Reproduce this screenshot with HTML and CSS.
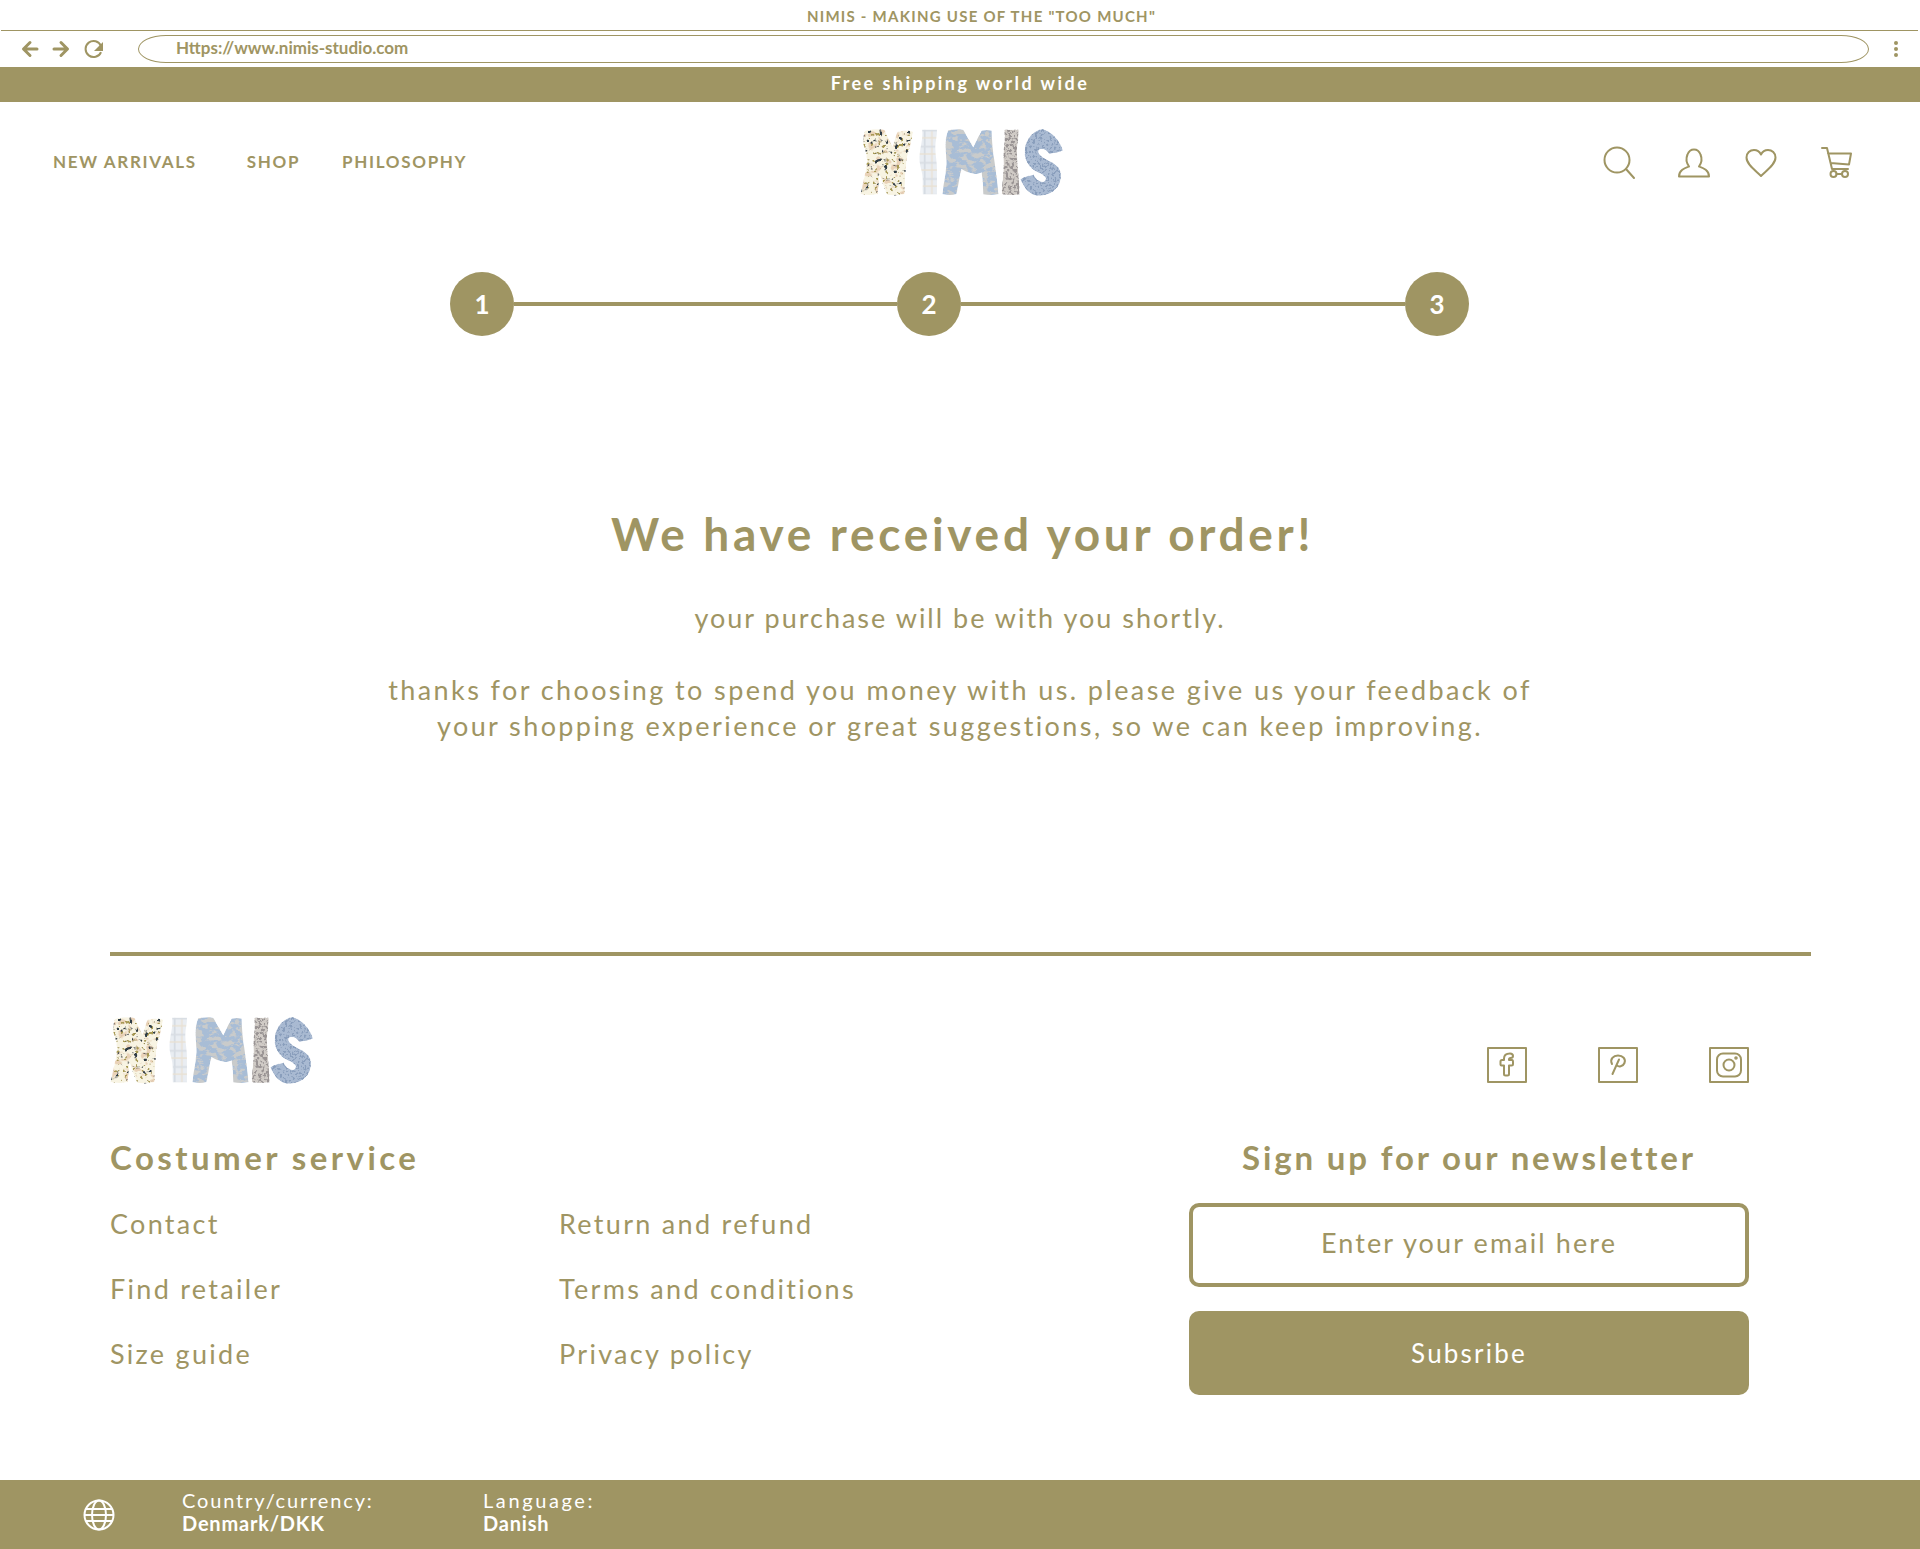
FILE: index.html
```html
<!DOCTYPE html>
<html lang="en">
<head>
<meta charset="utf-8">
<title>NIMIS - Order received</title>
<link rel="stylesheet" href="styles.css">
</head>
<body>
<svg class="defs" width="0" height="0" aria-hidden="true">
  <defs>
    <filter id="tex-floral" x="0" y="0" width="100%" height="100%">
      <feTurbulence type="fractalNoise" baseFrequency="0.07" numOctaves="2" seed="4"/>
      <feColorMatrix type="matrix" values="0 0 0 0 0  0 0 0 0 0  0 0 0 0 0  7 -7 0 0 -1.1" result="n"/>
      <feFlood flood-color="#2f3d46"/><feComposite in2="n" operator="in" result="dark"/>
      <feTurbulence type="fractalNoise" baseFrequency="0.05" numOctaves="2" seed="21"/>
      <feColorMatrix type="matrix" values="0 0 0 0 0  0 0 0 0 0  0 0 0 0 0  6 -6 0 0 -0.3" result="n2"/>
      <feFlood flood-color="#e9d2b8"/><feComposite in2="n2" operator="in" result="peach"/>
      <feTurbulence type="fractalNoise" baseFrequency="0.09" numOctaves="2" seed="33"/>
      <feColorMatrix type="matrix" values="0 0 0 0 0  0 0 0 0 0  0 0 0 0 0  7 -7 0 0 -1.2" result="n3"/>
      <feFlood flood-color="#a89a52"/><feComposite in2="n3" operator="in" result="olive"/>
      <feMerge result="m"><feMergeNode in="SourceGraphic"/><feMergeNode in="peach"/><feMergeNode in="olive"/><feMergeNode in="dark"/></feMerge>
      <feComposite in="m" in2="SourceAlpha" operator="in"/>
    </filter>
    <filter id="tex-marble" x="0" y="0" width="100%" height="100%">
      <feTurbulence type="fractalNoise" baseFrequency="0.045 0.07" numOctaves="3" seed="9"/>
      <feColorMatrix type="matrix" values="0 0 0 0 0  0 0 0 0 0  0 0 0 0 0  6 -6 0 0 0.25" result="n"/>
      <feFlood flood-color="#c9cbcb"/><feComposite in2="n" operator="in" result="dark"/>
      <feMerge result="m"><feMergeNode in="SourceGraphic"/><feMergeNode in="dark"/></feMerge>
      <feComposite in="m" in2="SourceAlpha" operator="in"/>
    </filter>
    <filter id="tex-grain" x="0" y="0" width="100%" height="100%">
      <feTurbulence type="fractalNoise" baseFrequency="0.12" numOctaves="2" seed="3"/>
      <feColorMatrix type="matrix" values="0 0 0 0 0.32  0 0 0 0 0.3  0 0 0 0 0.3  6 -6 0 0 0.2" result="n"/>
      <feMerge result="m"><feMergeNode in="SourceGraphic"/><feMergeNode in="n"/></feMerge>
      <feComposite in="m" in2="SourceAlpha" operator="in"/>
    </filter>
    <filter id="tex-speck" x="-15%" y="-15%" width="130%" height="130%">
      <feTurbulence type="fractalNoise" baseFrequency="0.14" numOctaves="2" seed="12"/>
      <feColorMatrix type="matrix" values="0 0 0 0 0.25  0 0 0 0 0.34  0 0 0 0 0.5  6 -6 0 0 -0.1" result="n"/>
      <feMerge result="m"><feMergeNode in="SourceGraphic"/><feMergeNode in="n"/></feMerge>
      <feComposite in="m" in2="SourceAlpha" operator="in"/>
    </filter>
    <pattern id="plaid" width="48" height="48" patternUnits="userSpaceOnUse">
      <rect width="48" height="48" fill="#e9edf2"/>
      <rect x="8" width="5" height="48" fill="#d6dce3"/>
      <rect x="30" width="4" height="48" fill="#e9e1d3"/>
      <rect y="10" width="48" height="5" fill="#d8dde3"/>
      <rect y="32" width="48" height="4" fill="#e9e1d3"/>
    </pattern>
    <symbol id="nimis-logo" viewBox="58 50 604 208">
      <path fill="#f8f4e3" filter="url(#tex-floral)" d="M72 62C90 55 120 56 132 60C140 80 148 92 155 108C160 92 165 75 170 64C185 60 205 60 216 64C212 90 204 115 198 140C192 180 192 220 190 250C172 254 155 254 140 252C130 232 122 210 116 190C114 212 112 232 110 250C92 253 75 252 60 250C66 220 74 190 78 160C80 135 74 115 66 95C68 82 70 72 72 62Z"/>
      <path fill="url(#plaid)" d="M243 58H287C288 75 282 92 282 110C282 135 288 158 287 180V250H245C243 230 247 210 243 190C240 172 234 158 235 140C236 112 246 88 243 58Z"/>
      <path fill="#a8bdd6" filter="url(#tex-marble)" d="M320 60C335 56 352 56 365 58C375 76 385 92 395 110C403 92 412 76 420 60C430 58 442 58 450 60C450 85 452 108 455 130C460 170 468 210 470 250C455 253 440 253 425 250C424 228 423 206 420 185C412 188 406 190 400 190C385 188 372 182 360 175C354 200 350 225 345 250C330 253 315 252 303 250C306 220 314 190 315 160C316 125 306 95 320 60Z"/>
      <path fill="#d0cbc6" filter="url(#tex-grain)" d="M487 58H530C532 80 524 105 525 130C527 170 532 210 533 250C515 253 497 253 480 250C480 215 487 185 485 150C483 118 492 88 487 58Z"/>
      <path fill="#a9bad2" filter="url(#tex-speck)" d="M600 56C625 62 650 85 662 120C650 125 635 128 622 130C612 118 600 112 590 118C585 130 600 140 620 150C645 162 660 175 655 205C650 240 615 256 585 254C565 252 548 235 535 205C548 198 560 194 575 192C582 205 592 215 605 212C615 208 612 198 598 190C570 178 548 160 548 125C548 90 570 62 600 56Z"/>
    </symbol>
  </defs>
</svg>

<div class="titlebar">NIMIS - MAKING USE OF THE "TOO MUCH"</div>
<div class="addressrow">
  <svg class="nav-arrows" width="84" height="22" viewBox="0 0 84 22" aria-hidden="true">
    <path class="browser-stroke" d="M17 11H4M10 4.500L3.500 11L10 17.500M34 11H47M41 4.500L47.500 11L41 17.500"/>
    <path class="browser-thin" d="M81 8A8 8 0 1 0 81 14"/>
    <path class="browser-fill" d="M83 4V13H74Z"/>
  </svg>
  <div class="urlbar">Https://www.nimis-studio.com</div>
  <svg class="kebab" width="6" height="16" viewBox="0 0 6 16" aria-hidden="true"><circle cx="3" cy="2" r="2"/><circle cx="3" cy="8" r="2"/><circle cx="3" cy="14" r="2"/></svg>
</div>
<div class="promo">Free shipping world wide</div>

<header class="site-header">
  <nav class="main-nav">
    <a class="nav-new">NEW ARRIVALS</a>
    <a class="nav-shop">SHOP</a>
    <a>PHILOSOPHY</a>
  </nav>
  <svg class="logo" role="img" aria-label="NIMIS"><use href="#nimis-logo"/></svg>
  <div class="header-icons">
    <svg class="ic ic-search" viewBox="0 0 32 32" aria-hidden="true"><circle cx="15" cy="13" r="12.500"/><path d="M24 22L32 31"/></svg>
    <svg class="ic ic-user" viewBox="0 0 32 32" aria-hidden="true"><path d="M1 29.500C1 23 7 21 11 19.500C8.500 16 8 11 9.500 7.500C11 3.500 14 2.500 16 2.500C18 2.500 21 3.500 22.500 7.500C24 11 23.500 16 21 19.500C25 21 31 23 31 29.500Z"/></svg>
    <svg class="ic ic-heart" viewBox="0 0 32 32" aria-hidden="true"><path d="M16 29C11 24 1.500 17.500 1.500 10.500C1.500 6 5 3 9 3C12 3 14.500 4.500 16 7.500C17.500 4.500 20 3 23 3C27 3 30.500 6 30.500 10.500C30.500 17.500 21 24 16 29Z"/></svg>
    <svg class="ic ic-cart" viewBox="0 0 32 32" aria-hidden="true"><path d="M1 1H6L11 22H27M7 6.500L30 6.500L28 17.500L9.500 16"/><circle cx="12.500" cy="27" r="3"/><circle cx="24" cy="27" r="3"/><path d="M15.500 27H21"/></svg>
  </div>
</header>

<main>
  <ol class="steps">
    <li class="step">1</li>
    <li class="step-line step-line-a"></li>
    <li class="step">2</li>
    <li class="step-line step-line-b"></li>
    <li class="step">3</li>
  </ol>
  <section class="confirmation">
    <h1>We have received your order!</h1>
    <p class="lead">your purchase will be with you shortly.</p>
    <p class="thanks">thanks for choosing to spend you money with us. please give us your feedback of<br>your shopping experience or great suggestions, so we can keep improving.</p>
  </section>
</main>

<footer class="site-footer">
  <div class="footer-top">
    <svg class="logo" role="img" aria-label="NIMIS"><use href="#nimis-logo"/></svg>
    <div class="socials">
      <svg class="social" viewBox="0 0 40 36" aria-hidden="true"><rect x="1" y="1" width="38" height="34"/><path d="M13.500 17.500V14.500C13.500 13.500 14 13 15 13H17V11.500C17 8 19.500 6.500 23 6.500C25 6.500 26 7.500 26 9C26 10.500 25 11 23.500 11C22.500 11 22 11.500 22 12.500V13H25C26 13 26 14 26 15V17C26 18 25.500 18.500 24.500 18.500H22V27C22 28 21.500 28.500 20.500 28.500H18.500C17.500 28.500 17 28 17 27V18.500H14.500C14 18.500 13.500 18 13.500 17.500Z"/></svg>
      <svg class="social" viewBox="0 0 40 36" aria-hidden="true"><rect x="1" y="1" width="38" height="34"/><path d="M14 17C11.500 12 15.500 8.500 20 8.500C25 8.500 28 12 26.500 16C25 19.500 20.500 20.500 18.500 18M21 12.500L14.500 27"/></svg>
      <svg class="social" viewBox="0 0 40 36" aria-hidden="true"><rect x="1" y="1" width="38" height="34"/><rect x="8" y="6.500" width="24" height="23" rx="6"/><circle cx="20" cy="18" r="5.500"/><circle cx="27" cy="11" r="0.800"/></svg>
    </div>
  </div>
  <div class="footer-main">
    <section class="service">
      <h2>Costumer service</h2>
      <ul class="service-links">
        <li>Contact</li><li>Return and refund</li>
        <li>Find retailer</li><li>Terms and conditions</li>
        <li>Size guide</li><li>Privacy policy</li>
      </ul>
    </section>
    <section class="newsletter">
      <h2>Sign up for our newsletter</h2>
      <div class="email-field">Enter your email here</div>
      <div class="subscribe">Subsribe</div>
    </section>
  </div>
</footer>

<div class="locale-bar">
  <svg class="globe" viewBox="0 0 32 32" aria-hidden="true"><circle cx="16" cy="16" r="14.500"/><ellipse cx="16" cy="16" rx="7" ry="14.500"/><path d="M3 10H29M3 22H29M1.500 16H30.500"/></svg>
  <div class="locale locale-country"><span>Country/currency:</span><strong>Denmark/DKK</strong></div>
  <div class="locale locale-language"><span>Language:</span><strong>Danish</strong></div>
</div>
</body>
</html>
```
FILE: styles.css
```css
* { box-sizing: border-box; }
html, body { margin: 0; padding: 0; }
body {
  width: 1920px;
  height: 1549px;
  overflow: hidden;
  background: #fff;
  color: #9f9563;
  font-family: Lato, "Liberation Sans", sans-serif;
}
.defs { position: absolute; }
h1, h2, p, ul, ol { margin: 0; padding: 0; list-style: none; }

.titlebar {
  height: 31px;
  border-bottom: 1px solid #9f9563;
  margin: 0 2px 0 1px;
  padding-left: 44px;
  text-align: center;
  font-size: 15px;
  font-weight: 700;
  line-height: 32px;
  letter-spacing: 1.25px;
}
.addressrow {
  height: 36px;
  display: flex;
  align-items: flex-start;
  padding: 4px 0 0 20px;
}
.nav-arrows { margin-top: 3px; flex: none; }
.browser-stroke { fill: none; stroke: #9f9563; stroke-width: 3; stroke-linejoin: round; stroke-linecap: round; }
.browser-thin { fill: none; stroke: #9f9563; stroke-width: 2; }
.browser-fill { fill: #9f9563; }
.urlbar {
  width: 1731px;
  height: 28px;
  margin-left: 34px;
  border: 1px solid #9f9563;
  border-radius: 28px / 14px;
  padding-left: 37px;
  font-size: 17px;
  font-weight: 700;
  line-height: 24px;
}
.kebab { fill: #9f9563; margin: 6px 0 0 24px; flex: none; }
.promo {
  height: 35px;
  background: #9f9563;
  color: #fff;
  text-align: center;
  font-size: 18px;
  font-weight: 700;
  line-height: 33px;
  letter-spacing: 2.45px;
}

.site-header {
  height: 134px;
  display: grid;
  grid-template-columns: 1fr 203px 1fr;
  align-items: start;
  padding: 25px 67px 0 53px;
}
.main-nav {
  display: flex;
  gap: 42px;
  font-size: 17px;
  font-weight: 700;
  letter-spacing: 1.67px;
  padding-top: 25px;
  line-height: 20px;
}
.nav-new { margin-right: 8px; }
.logo { width: 203px; height: 70px; display: block; }
.site-header .logo { margin-left: 8px; }
.header-icons { display: flex; justify-content: flex-end; padding-top: 20px; }
.ic { width: 32px; height: 32px; fill: none; stroke: #9f9563; stroke-width: 2; stroke-linejoin: round; stroke-linecap: round; overflow: visible; }
.ic-user { margin-left: 44px; }
.ic-heart { margin-left: 35px; }
.ic-cart { margin-left: 44px; }

.steps {
  display: flex;
  align-items: center;
  margin: 36px 0 0 450px;
  width: 1019px;
  height: 64px;
}
.step {
  width: 64px;
  height: 64px;
  flex: none;
  border-radius: 50%;
  background: #9f9563;
  color: #fff;
  font-size: 26px;
  font-weight: 700;
  line-height: 64px;
  text-align: center;
}
.step-line { height: 4px; background: #9f9563; }
.step-line-a { width: 383px; }
.step-line-b { width: 444px; }

.confirmation { text-align: center; padding-top: 171px; height: 616px; }
.confirmation h1 {
  padding-left: 5px;
  font-size: 46px;
  font-weight: 700;
  line-height: 54px;
  letter-spacing: 3.7px;
}
.lead, .thanks {
  font-size: 27px;
  line-height: 36px;
}
.lead { margin-top: 39px; letter-spacing: 2px; }
.thanks { margin-top: 36px; letter-spacing: 2.4px; }

.site-footer {
  width: 1701px;
  margin-left: 110px;
  border-top: 4px solid #9f9563;
  height: 528px;
}
.footer-top {
  display: flex;
  justify-content: space-between;
  align-items: flex-start;
  padding: 59px 62px 0 0;
  height: 181px;
}
.socials { display: flex; gap: 71px; padding-top: 32px; }
.social { width: 40px; height: 36px; fill: none; stroke: #9f9563; stroke-width: 2; stroke-linejoin: round; stroke-linecap: round; }
.footer-main { display: flex; justify-content: space-between; padding-right: 62px; }
.service { width: 800px; }
.service h2, .newsletter h2 {
  font-size: 33px;
  font-weight: 700;
  line-height: 40px;
}
.service h2 { letter-spacing: 3.45px; }
.newsletter h2 { letter-spacing: 2.85px; }
.service-links {
  display: grid;
  grid-template-columns: 449px 1fr;
  row-gap: 25px;
  margin-top: 27px;
  font-size: 27px;
  line-height: 40px;
  letter-spacing: 2.3px;
}
.newsletter { width: 560px; text-align: center; }
.email-field, .subscribe {
  height: 84px;
  border-radius: 10px;
}
.email-field {
  margin-top: 26px;
  border: 4px solid #9f9563;
  font-size: 27px;
  letter-spacing: 2.1px;
  line-height: 71px;
}
.subscribe {
  margin-top: 24px;
  background: #9f9563;
  color: #fff;
  font-size: 26px;
  letter-spacing: 2.2px;
  line-height: 84px;
}

.locale-bar {
  height: 69px;
  background: #9f9563;
  color: #fff;
  display: flex;
  align-items: center;
  padding: 0 0 7px 83px;
}
.globe { width: 32px; height: 32px; fill: none; stroke: #fff; stroke-width: 2; flex: none; margin-top: 7px; }
.locale { display: flex; flex-direction: column; font-size: 20px; line-height: 22px; letter-spacing: 1.85px; }
.locale span { line-height: 23px; }
.locale-country { margin-left: 67px; width: 301px; }
.locale-language span { letter-spacing: 2.6px; }
.locale strong { font-weight: 700; letter-spacing: 0.8px; }
```
